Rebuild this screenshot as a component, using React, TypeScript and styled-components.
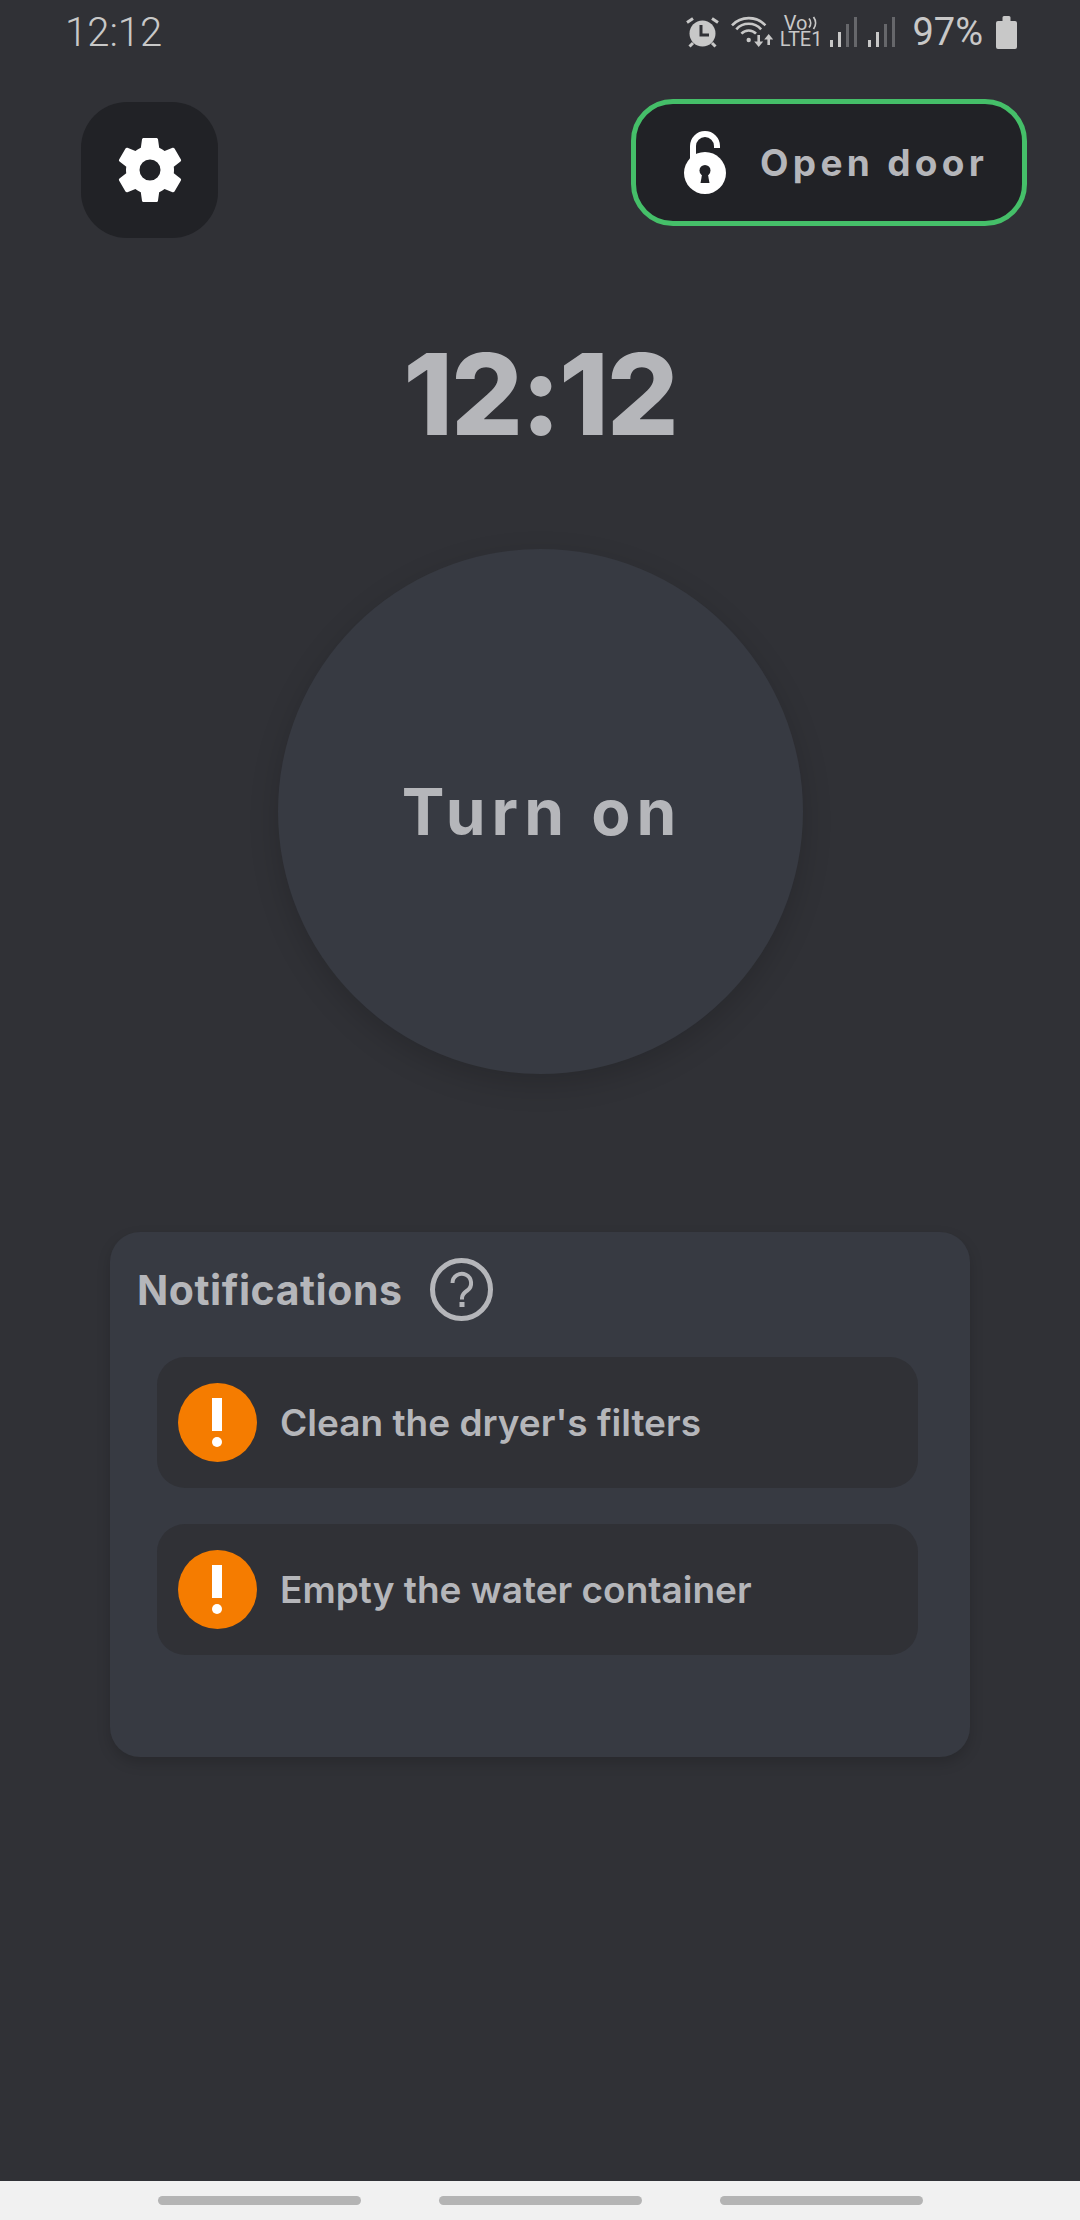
import React from "react";
import styled, { createGlobalStyle } from "styled-components";

const GlobalStyle = createGlobalStyle`
    html, body {
        margin: 0;
        padding: 0;
        background: #303136;
    }
`;

const Page = styled.div`
    display: flex;
    flex-direction: column;
    width: 1080px;
    height: 2220px;
    overflow: hidden;
    background: #303136;
    font-family: Inter, "Liberation Sans", sans-serif;
    color: #b5b6ba;
`;

const StatusBar = styled.div`
    display: flex;
    align-items: center;
    justify-content: space-between;
    height: 64px;
    padding: 0 63px 0 65px;
    font-family: Roboto, "Liberation Sans", sans-serif;
    color: #c8c8c8;
`;

const StatusTime = styled.span`
    font-size: 40px;
    font-weight: 300;
`;

const StatusIcons = styled.div`
    display: flex;
    align-items: center;
`;

const StatusSlot = styled.div<{ $gap: number }>`
    display: flex;
    margin-left: ${(p) => p.$gap}px;
`;

const Volte = styled.div`
    display: flex;
    flex-direction: column;
    align-items: center;
    margin-top: -2px;
    font-size: 20px;
    font-weight: 400;
    line-height: 16px;
`;

const VoRow = styled.div`
    display: flex;
    align-items: center;
    gap: 1px;
`;

const Battery = styled.span`
    font-size: 38px;
`;

const TopRow = styled.div`
    display: flex;
    justify-content: space-between;
    align-items: flex-start;
    margin-top: 35px;
    padding: 0 53px 0 81px;
`;

const SettingsButton = styled.button`
    display: flex;
    align-items: center;
    justify-content: center;
    width: 137px;
    height: 136px;
    margin-top: 3px;
    padding: 0;
    border: 0;
    border-radius: 46px;
    background: #212226;
`;

const DoorButton = styled.button`
    display: flex;
    align-items: center;
    box-sizing: border-box;
    width: 396px;
    height: 127px;
    padding: 0 0 0 48px;
    border: 5px solid #45bf69;
    border-radius: 42px;
    background: #212226;
    font-family: inherit;
    color: inherit;
`;

const DoorLabel = styled.span`
    margin-left: 34px;
    font-size: 37px;
    font-weight: 700;
    letter-spacing: 4.3px;
`;

const Clock = styled.div`
    margin-top: 100px;
    font-size: 113px;
    font-weight: 800;
    line-height: 113px;
    letter-spacing: -2px;
    text-align: center;
`;

const PowerButton = styled.button`
    display: flex;
    align-items: center;
    justify-content: center;
    align-self: center;
    width: 525px;
    height: 525px;
    margin-top: 98px;
    padding: 0 0 0 4px;
    border: 0;
    border-radius: 50%;
    background: #373a42;
    box-shadow: 0 10px 30px rgba(0, 0, 0, 0.16);
    font-family: inherit;
    font-size: 64px;
    font-weight: 700;
    letter-spacing: 6px;
    color: inherit;
`;

const Card = styled.section`
    display: flex;
    flex-direction: column;
    gap: 36px;
    align-self: center;
    box-sizing: border-box;
    width: 860px;
    height: 525px;
    margin-top: 158px;
    padding: 26px 52px 0 27px;
    border-radius: 30px;
    background: #373a42;
    box-shadow: 0 6px 14px rgba(0, 0, 0, 0.16);
`;

const CardHeader = styled.div`
    display: flex;
    align-items: center;
    gap: 27px;
`;

const CardTitle = styled.h2`
    margin: 0;
    font-size: 41px;
    font-weight: 700;
    letter-spacing: 0.55px;
`;

const NoticeRow = styled.div`
    display: flex;
    align-items: center;
    gap: 23px;
    height: 131px;
    margin-left: 20px;
    padding-left: 21px;
    border-radius: 28px;
    background: #303136;
    font-size: 37px;
    font-weight: 600;
`;

const NavBar = styled.div`
    display: flex;
    justify-content: center;
    gap: 78px;
    height: 39px;
    margin-top: auto;
    padding-top: 15px;
    box-sizing: border-box;
    background: #f1f1f1;
`;

const NavPill = styled.div`
    width: 203px;
    height: 9px;
    border-radius: 5px;
    background: #b4b4b4;
`;

const AlarmIcon = () => (
    <svg width="33" height="31" viewBox="0 0 33 31">
        <circle cx="16.5" cy="16.5" r="13" fill="#c8c8c8" />
        <path d="M15 8v10h8" fill="none" stroke="#303136" strokeWidth="3" />
        <path
            d="M1 5.5 7 1.5M32 5.5 26 1.5M3.5 29.5 7 26M29.5 29.5 26 26"
            stroke="#c8c8c8"
            strokeWidth="3"
            fill="none"
        />
    </svg>
);

const WifiIcon = () => (
    <svg width="42" height="32" viewBox="0 0 42 32">
        <g fill="none" stroke="#c8c8c8" strokeWidth="2.6">
            <path d="M1 9.3A23 23 0 0 1 34.4 9.3" />
            <path d="M5.3 13.3A16.7 16.7 0 0 1 30.1 13.3" />
            <path d="M10.4 17.6A10 10 0 0 1 25 17.6" />
            <path d="M27.7 19v9M37.7 29v-9" />
        </g>
        <circle cx="17.7" cy="24" r="2.2" fill="#c8c8c8" />
        <path d="M23.2 25.5h9l-4.5 5.5zM33.2 23.5h9l-4.5-5.5z" fill="#c8c8c8" />
    </svg>
);

const VoWavesIcon = () => (
    <svg width="10" height="14" viewBox="0 0 10 14">
        <path
            d="M1 2.5a7 7 0 0 1 0 9M5.5 1a10 10 0 0 1 0 12"
            fill="none"
            stroke="#c8c8c8"
            strokeWidth="1.8"
        />
    </svg>
);

const SignalIcon = () => (
    <svg width="27" height="30" viewBox="0 0 27 30">
        <rect x="0" y="23" width="3" height="7" fill="#c8c8c8" />
        <rect x="8" y="15" width="3" height="15" fill="#c8c8c8" />
        <rect x="16" y="7" width="3" height="23" fill="#66676b" />
        <rect x="24" y="0" width="3" height="30" fill="#66676b" />
    </svg>
);

const BatteryIcon = () => (
    <svg width="21" height="33" viewBox="0 0 21 33">
        <path
            d="M6.5 1.5a1.5 1.5 0 0 1 1.5-1.5h5a1.5 1.5 0 0 1 1.5 1.5V5h4.5a2 2 0 0 1 2 2v24a2 2 0 0 1-2 2H2a2 2 0 0 1-2-2V7a2 2 0 0 1 2-2h4.500z"
            fill="#c8c8c8"
        />
    </svg>
);

const GearIcon = () => (
    <svg width="80" height="80" viewBox="0 0 24 24">
        <path
            fill="#fff"
            fillRule="evenodd"
            d="M19.14 12.94c.04-.3.06-.61.06-.94 0-.32-.02-.64-.07-.94l2.03-1.58c.18-.14.23-.41.12-.61l-1.92-3.32c-.12-.22-.37-.29-.59-.22l-2.39.96c-.5-.38-1.03-.7-1.62-.94l-.36-2.54c-.04-.24-.24-.41-.48-.41h-3.84c-.24 0-.43.17-.47.41l-.36 2.54c-.59.24-1.13.57-1.62.94l-2.39-.96c-.22-.08-.47 0-.59.22L2.74 8.87c-.12.21-.08.47.12.61l2.03 1.58c-.05.3-.09.63-.09.94s.02.64.07.94l-2.03 1.58c-.18.14-.23.41-.12.61l1.92 3.32c.12.22.37.29.59.22l2.39-.96c.5.38 1.03.7 1.62.94l.36 2.54c.05.24.24.41.48.41h3.84c.24 0 .44-.17.47-.41l.36-2.54c.59-.24 1.13-.56 1.62-.94l2.39.96c.22.08.47 0 .59-.22l1.92-3.32c.12-.22.07-.47-.12-.61l-2.01-1.58zM12 15.15a3.15 3.15 0 1 1 0-6.300a3.15 3.15 0 0 1 0 6.300z"
        />
    </svg>
);

const LockIcon = () => (
    <svg width="42" height="64" viewBox="0 0 42 64">
        <path d="M9 28V15a12 12 0 0 1 24 0v2" fill="none" stroke="#fff" strokeWidth="6" />
        <circle cx="21" cy="42" r="21" fill="#fff" />
        <circle cx="21" cy="39.500" r="5.500" fill="#212226" />
        <path d="M18.500 41h5l2 11h-9z" fill="#212226" />
    </svg>
);

const HelpIcon = () => (
    <svg width="63" height="63" viewBox="0 0 63 63">
        <circle cx="31.500" cy="31.500" r="29" fill="none" stroke="#b5b6ba" strokeWidth="5" />
        <path
            d="M22.500 25a9.300 9.300 0 1 1 15 7.400c-3.300 2.500-5.500 4-5.500 7.600v1.500"
            fill="none"
            stroke="#b5b6ba"
            strokeWidth="4"
        />
        <rect x="29.500" y="44" width="5" height="5" fill="#b5b6ba" />
    </svg>
);

const WarningIcon = () => (
    <svg width="79" height="79" viewBox="0 0 79 79">
        <circle cx="39.500" cy="39.500" r="39.500" fill="#f57c00" />
        <rect x="34" y="15" width="10" height="33" fill="#fff" />
        <circle cx="39" cy="59" r="5" fill="#fff" />
    </svg>
);

const notices = ["Clean the dryer's filters", "Empty the water container"];

export default function App(): React.JSX.Element {
    return (
        <Page>
            <GlobalStyle />
            <StatusBar>
                <StatusTime>12:12</StatusTime>
                <StatusIcons>
                    <AlarmIcon />
                    <StatusSlot $gap={12}>
                        <WifiIcon />
                    </StatusSlot>
                    <StatusSlot $gap={7}>
                        <Volte>
                            <VoRow>
                                Vo
                                <VoWavesIcon />
                            </VoRow>
                            LTE1
                        </Volte>
                    </StatusSlot>
                    <StatusSlot $gap={8}>
                        <SignalIcon />
                    </StatusSlot>
                    <StatusSlot $gap={11}>
                        <SignalIcon />
                    </StatusSlot>
                    <StatusSlot $gap={17}>
                        <Battery>97%</Battery>
                    </StatusSlot>
                    <StatusSlot $gap={13}>
                        <BatteryIcon />
                    </StatusSlot>
                </StatusIcons>
            </StatusBar>
            <TopRow>
                <SettingsButton>
                    <GearIcon />
                </SettingsButton>
                <DoorButton>
                    <LockIcon />
                    <DoorLabel>Open door</DoorLabel>
                </DoorButton>
            </TopRow>
            <Clock>12:12</Clock>
            <PowerButton>Turn on</PowerButton>
            <Card>
                <CardHeader>
                    <CardTitle>Notifications</CardTitle>
                    <HelpIcon />
                </CardHeader>
                {notices.map((text) => (
                    <NoticeRow key={text}>
                        <WarningIcon />
                        {text}
                    </NoticeRow>
                ))}
            </Card>
            <NavBar>
                <NavPill />
                <NavPill />
                <NavPill />
            </NavBar>
        </Page>
    );
}
